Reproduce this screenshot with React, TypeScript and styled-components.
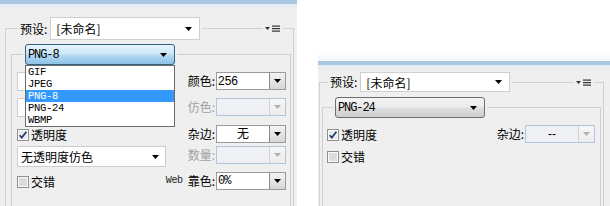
import React from "react";
import styled, { createGlobalStyle } from "styled-components";

const Global = createGlobalStyle`
  html, body { margin: 0; padding: 0; background: #ffffff; }
  body {
    font-family: "Noto Sans CJK SC", "Noto Sans", sans-serif;
    font-size: 12px;
    color: #000;
  }
  #root { width: 610px; height: 206px; overflow: hidden; }
`;

const CJK = `"Noto Sans CJK SC", "Noto Sans", sans-serif`;
const MONO = `"Liberation Mono", "DejaVu Sans Mono", monospace`;
const SANS = `"Liberation Sans", "Noto Sans CJK SC", sans-serif`;

const Page = styled.div`
  display: flex;
  width: 610px;
  height: 206px;
  overflow: hidden;
  column-gap: 21px;
`;

const RightColumn = styled.div`
  flex: 1 1 auto;
  display: flex;
  flex-direction: column;
  min-width: 0;
`;

const TopFade = styled.div`
  flex: 0 0 61px;
  background: linear-gradient(#ffffff 0, #ffffff 50px, #f1f6fb 61px);
`;

const Panel = styled.div<{ $w?: number; $pl: number; $pr: number }>`
  box-sizing: border-box;
  flex: ${(p) => (p.$w ? `0 0 ${p.$w}px` : "1 1 auto")};
  height: 100%;
  border-top: 4px solid #abc6e2;
  background: linear-gradient(#e2eaf3, #efefef 7px);
  padding: 0 ${(p) => p.$pr}px 0 ${(p) => p.$pl}px;
  overflow: hidden;
`;

const Group = styled.fieldset<{ $mt: number; $pl: number; $pr: number; $pt?: number }>`
  margin: ${(p) => p.$mt}px 0 0 0;
  padding: ${(p) => p.$pt ?? 0}px ${(p) => p.$pr}px 0 ${(p) => p.$pl}px;
  border: 1px solid #d0d0d0;
  min-width: 0;
  min-height: 300px;
`;

const Legend = styled.legend<{ $ml: number; $mr?: number }>`
  box-sizing: border-box;
  margin-left: ${(p) => p.$ml}px;
  padding: 0 2px;
  display: flex;
  align-items: center;
  ${(p) => (p.$mr !== undefined ? `width: calc(100% - ${p.$ml + p.$mr}px);` : "")}
`;

const HeaderLabel = styled.span`
  font: 12px/18px ${CJK};
  margin-right: 3px;
  white-space: nowrap;
`;

const HeaderLine = styled.div`
  flex: 1 1 auto;
  height: 0;
  border-top: 1px solid #d0d0d0;
  margin: 0 2px 0 2px;
`;

const PresetSelect = styled.div<{ $h: number }>`
  box-sizing: border-box;
  width: 150px;
  height: ${(p) => p.$h}px;
  display: flex;
  align-items: center;
  justify-content: space-between;
  padding: 0 7px 0 5px;
  background: #ffffff;
  border: 1px solid #cfcfcf;
  font: 12px ${CJK};
`;

const FormatSelect = styled.div<{ $open?: boolean }>`
  position: relative;
  box-sizing: border-box;
  width: 150px;
  height: 21px;
  display: flex;
  align-items: center;
  justify-content: space-between;
  padding: 0 7px 0 2px;
  border: 1px solid ${(p) => (p.$open ? "#34627f" : "#6e6e6e")};
  border-radius: 3px;
  background: ${(p) =>
    p.$open
      ? "linear-gradient(#e6f3fb, #cde7f7 45%, #b3d9f2 55%, #8ec2e6)"
      : "linear-gradient(#f4f4f4, #ececec 45%, #dedede 55%, #cdcdcd)"};
  font: 12px ${MONO};
  letter-spacing: -1.1px;
`;

const DropList = styled.ul`
  position: absolute;
  top: calc(100% + 1px);
  left: -1px;
  width: 150px;
  box-sizing: border-box;
  margin: 0;
  padding: 0;
  list-style: none;
  background: #ffffff;
  border: 1px solid #6a6a6a;
  z-index: 5;
`;

const DropItem = styled.li<{ $active?: boolean }>`
  height: 12px;
  padding-left: 2px;
  font: 10.5px/12px ${MONO};
  letter-spacing: -0.3px;
  color: ${(p) => (p.$active ? "#ffffff" : "#000000")};
  background: ${(p) => (p.$active ? "#3399ff" : "transparent")};
`;

const Grid = styled.div<{ $cols: string; $rows: string }>`
  display: grid;
  grid-template-columns: ${(p) => p.$cols};
  grid-template-rows: ${(p) => p.$rows};
`;

const FieldLabel = styled.div<{ $disabled?: boolean }>`
  justify-self: end;
  align-self: start;
  display: flex;
  align-items: center;
  gap: 5px;
  height: 18px;
  padding-right: 1px;
  font: 12px/18px ${CJK};
  color: ${(p) => (p.$disabled ? "#a3a3a3" : "#000")};
  white-space: nowrap;
`;

const WebTag = styled.span`
  font: 10px/18px ${MONO};
  letter-spacing: -0.4px;
  color: #222;
`;

const PlainSelect = styled.div<{ $h: number }>`
  box-sizing: border-box;
  width: 149px;
  height: ${(p) => p.$h}px;
  align-self: start;
  display: flex;
  align-items: center;
  padding: 0 6px 0 3px;
  background: #ffffff;
  border: 1px solid #cdcdcd;
  font: 12px ${CJK};
  & > svg { margin-left: auto; }
`;

const Combo = styled.div<{ $disabled?: boolean }>`
  box-sizing: border-box;
  width: 70px;
  height: 18px;
  align-self: start;
  display: flex;
  border: 1px solid ${(p) => (p.$disabled ? "#b3c5dd" : "#9a9a9a")};
  background: ${(p) => (p.$disabled ? "#eef0f3" : "#ffffff")};
`;

const ComboText = styled.div<{ $center?: boolean; $mono?: boolean }>`
  flex: 1 1 auto;
  min-width: 0;
  padding: 0 1px;
  text-align: ${(p) => (p.$center ? "center" : "left")};
  font: ${(p) => (p.$mono ? `12px/16px ${MONO}` : `12px/16px ${SANS}`)};
  letter-spacing: ${(p) => (p.$mono ? "-1px" : "0")};
`;

const ComboButton = styled.div<{ $disabled?: boolean }>`
  box-sizing: border-box;
  width: 16px;
  display: flex;
  align-items: center;
  justify-content: center;
  border-left: 1px solid ${(p) => (p.$disabled ? "#d2d2d2" : "#8a8a8a")};
  background: ${(p) =>
    p.$disabled ? "linear-gradient(#f7f7f7, #ececec)" : "linear-gradient(#f4f4f4, #d6d6d6)"};
`;

const Check = styled.label<{ $mt?: number }>`
  display: flex;
  align-items: center;
  gap: 2px;
  align-self: start;
  margin-top: ${(p) => p.$mt ?? 0}px;
  height: 14px;
  font: 12px/14px ${CJK};
`;

const Arrow = ({ color = "#000" }: { color?: string }) => (
  <svg width="7" height="4" viewBox="0 0 7 4" aria-hidden="true">
    <path d="M0 0H7L3.5 4Z" fill={color} />
  </svg>
);

const MenuIcon = () => (
  <svg width="16" height="7" viewBox="0 0 16 7" aria-hidden="true">
    <path d="M0 2H5L2.5 5Z" fill="#333" />
    <rect x="7" y="0.5" width="8" height="1.2" fill="#333" />
    <rect x="7" y="3" width="8" height="1.2" fill="#333" />
    <rect x="7" y="5.5" width="8" height="1.2" fill="#333" />
  </svg>
);

const CheckBoxIcon = ({ checked }: { checked?: boolean }) => (
  <svg width="12" height="12" viewBox="0 0 12 12" aria-hidden="true">
    <rect x="0.5" y="0.5" width="11" height="11" fill="#fbfbfb" stroke="#8e8f8f" />
    <rect x="2" y="2" width="8" height="8" fill={checked ? "#e9e9e9" : "#dcdcdc"} />
    {checked && (
      <path d="M2.6 6.2L4.8 8.6L9.4 2.8" fill="none" stroke="#253a75" strokeWidth="1.7" />
    )}
  </svg>
);

type ComboProps = { value: string; disabled?: boolean; center?: boolean; mono?: boolean };
const ComboBox = ({ value, disabled, center, mono }: ComboProps) => (
  <Combo $disabled={disabled}>
    <ComboText $center={center} $mono={mono}>{value}</ComboText>
    <ComboButton $disabled={disabled}>
      <Arrow color={disabled ? "#b0b0b0" : "#000"} />
    </ComboButton>
  </Combo>
);

const formats = ["GIF", "JPEG", "PNG-8", "PNG-24", "WBMP"];

export default function App() {
  return (
    <>
      <Global />
      <Page>
        <Panel $w={297} $pl={5} $pr={3}>
          <Group $mt={13} $pl={5} $pr={2}>
            <Legend $ml={7} $mr={8}>
              <HeaderLabel>预设:</HeaderLabel>
              <PresetSelect $h={23}>
                <span>[未命名]</span>
                <Arrow />
              </PresetSelect>
              <HeaderLine />
              <MenuIcon />
            </Legend>
            <Group $mt={4} $pl={5} $pr={3} $pt={7}>
              <Legend $ml={6}>
                <FormatSelect $open>
                  <span>PNG-8</span>
                  <Arrow />
                  <DropList>
                    {formats.map((f) => (
                      <DropItem key={f} $active={f === "PNG-8"}>
                        {f}
                      </DropItem>
                    ))}
                  </DropList>
                </FormatSelect>
              </Legend>
              <Grid $cols="149px 50px 70px" $rows="26px 27px 21px 26px 20px">
                <PlainSelect $h={19}>
                  <Arrow />
                </PlainSelect>
                <FieldLabel>颜色:</FieldLabel>
                <ComboBox value="256" />

                <PlainSelect $h={19}>
                  <Arrow />
                </PlainSelect>
                <FieldLabel $disabled>仿色:</FieldLabel>
                <ComboBox value="" disabled />

                <Check $mt={3}>
                  <CheckBoxIcon checked />
                  透明度
                </Check>
                <FieldLabel>杂边:</FieldLabel>
                <ComboBox value="无" center />

                <PlainSelect $h={21}>
                  <span>无透明度仿色</span>
                  <Arrow />
                </PlainSelect>
                <FieldLabel $disabled>数量:</FieldLabel>
                <ComboBox value="" disabled />

                <Check $mt={3}>
                  <CheckBoxIcon />
                  交错
                </Check>
                <FieldLabel>
                  <WebTag>Web</WebTag>
                  <span>靠色:</span>
                </FieldLabel>
                <ComboBox value="0%" mono />
              </Grid>
            </Group>
          </Group>
        </Panel>

        <RightColumn>
          <TopFade />
          <Panel $pl={1} $pr={6}>
            <Group $mt={7} $pl={2} $pr={2}>
              <Legend $ml={6} $mr={7}>
                <HeaderLabel>预设:</HeaderLabel>
                <PresetSelect $h={20}>
                  <span>[未命名]</span>
                  <Arrow />
                </PresetSelect>
                <HeaderLine />
                <MenuIcon />
              </Legend>
              <Group $mt={5} $pl={4} $pr={5} $pt={7}>
                <Legend $ml={6}>
                  <FormatSelect>
                    <span>PNG-24</span>
                    <Arrow />
                  </FormatSelect>
                </Legend>
                <Grid $cols="1fr auto 70px" $rows="25px 20px">
                  <Check $mt={3}>
                    <CheckBoxIcon checked />
                    透明度
                  </Check>
                  <FieldLabel>杂边:</FieldLabel>
                  <ComboBox value="--" center disabled />
                  <Check $mt={0}>
                    <CheckBoxIcon />
                    交错
                  </Check>
                </Grid>
              </Group>
            </Group>
          </Panel>
        </RightColumn>
      </Page>
    </>
  );
}
